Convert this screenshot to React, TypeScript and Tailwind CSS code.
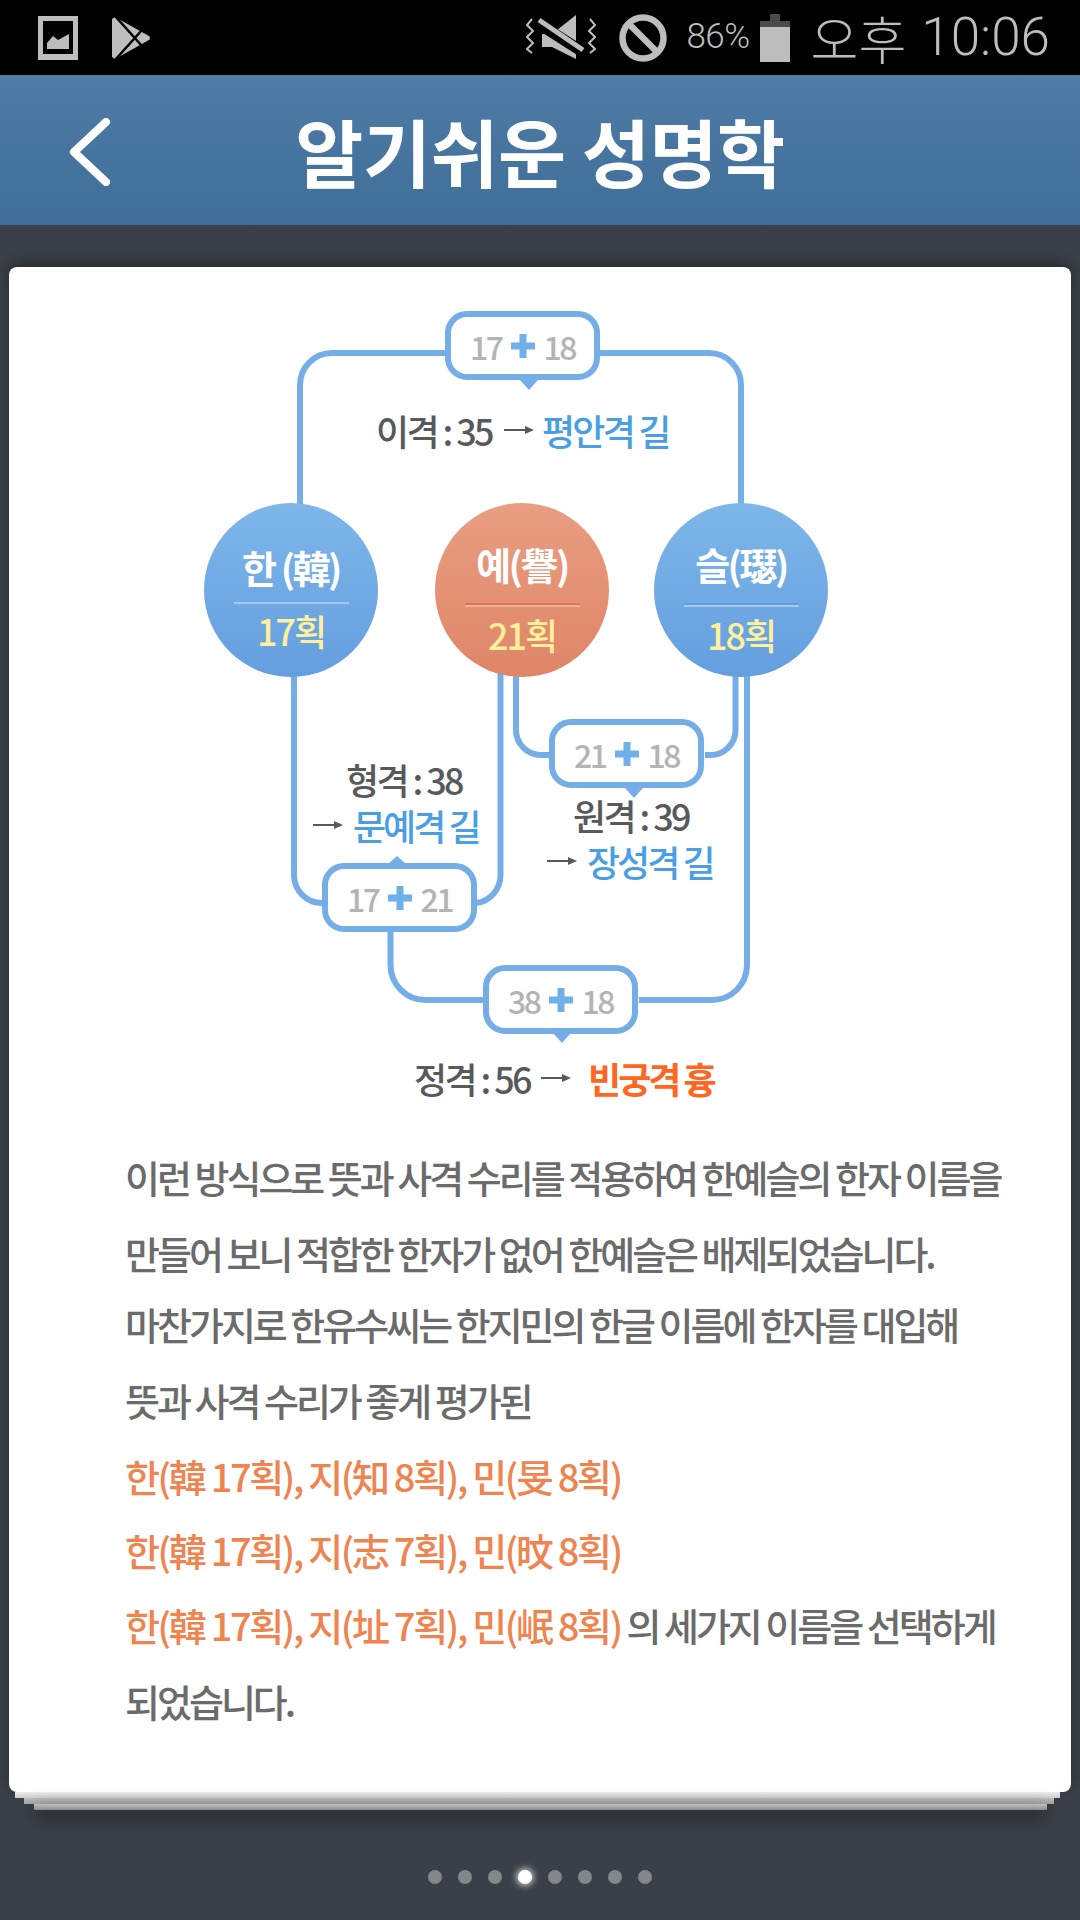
import React from 'react';

const Arrow = () => (
  <svg width="30" height="12" viewBox="0 0 30 12" className="shrink-0">
    <path d="M0 6H25" stroke="#58595b" strokeWidth="2" />
    <path d="M21 2L30 6L21 10Z" fill="#58595b" />
  </svg>
);

const Plus = () => (
  <svg width="24" height="24" viewBox="0 0 24 24" className="shrink-0">
    <path d="M12 0V24M0 12H24" stroke="#6fb0e8" strokeWidth="7" />
  </svg>
);

const SumBox: React.FC<{ a: string; b: string; className: string }> = ({ a, b, className }) => (
  <div className={`absolute flex h-[69px] w-[155px] items-center justify-center gap-[9px] rounded-[22px] border-[6px] border-[#75aee6] bg-white text-[32px] tracking-[-2.5px] text-[#b4b4b4] ${className}`}>
    <span>{a}</span>
    <Plus />
    <span>{b}</span>
  </div>
);

const Circle: React.FC<{ name: string; count: string; className: string; nameClass: string; rule: string; countClass: string }> = ({ name, count, className, nameClass, rule, countClass }) => (
  <div className={`absolute top-[236px] flex h-[174px] w-[174px] flex-col items-center rounded-full ${className}`}>
    <div className={`h-[52px] text-[38px] leading-[52px] font-bold tracking-[-2.5px] text-white ${nameClass}`}>{name}</div>
    <div className={`w-[115px] ${rule}`} />
    <div className={`text-[36px] leading-[46px] font-medium tracking-[-2px] text-[#fff09c] ${countClass}`}>{count}</div>
  </div>
);

const lines = [
  '이런 방식으로 뜻과 사격 수리를 적용하여 한예슬의 한자 이름을',
  '만들어 보니 적합한 한자가 없어 한예슬은 배제되었습니다.',
  '마찬가지로 한유수씨는 한지민의 한글 이름에 한자를 대입해',
  '뜻과 사격 수리가 좋게 평가된',
];

export default function App() {
  return (
    <div className="flex h-[1920px] w-[1080px] flex-col overflow-hidden bg-[#3b3f47] font-['Noto_Sans_CJK_KR',sans-serif]">
      <div className="flex h-[75px] items-center bg-black pr-[30px] pl-[38px] text-[#bdbdbd]">
        <svg width="40" height="44" viewBox="0 0 40 44">
          <path fillRule="evenodd" d="M0 0H40V44H0ZM5 5V38H35V5Z" fill="#bdbdbd" />
          <path d="M9 33V27L15 20L20 24L31 18V33Z" fill="#bdbdbd" />
        </svg>
        <svg width="39" height="44" viewBox="0 0 39 44" className="ml-[34px]">
          <path d="M0 3L3 1L37 20Q39 22 37 24L3 43L0 41Z" fill="#bdbdbd" />
          <path d="M3 0L30 30M3 44L30 14" stroke="#000" strokeWidth="2.5" />
        </svg>
        <svg width="70" height="46" viewBox="0 0 70 46" className="ml-auto">
          <path d="M6 4L1 10L7 16L1 22L7 28L1 34L6 38M64 4L69 10L63 16L69 22L63 28L69 34L64 38" fill="none" stroke="#bdbdbd" strokeWidth="2" />
          <path d="M16 19H26L50 0V44L26 32H16Z" fill="#bdbdbd" />
          <path d="M10 7L60 39" stroke="#000" strokeWidth="11" />
          <path d="M13 5L57 35" stroke="#bdbdbd" strokeWidth="5" />
        </svg>
        <svg width="48" height="48" viewBox="0 0 48 48" className="ml-[23px]">
          <circle cx="24" cy="24" r="20.5" fill="none" stroke="#bdbdbd" strokeWidth="6.5" />
          <path d="M10 10L38 38" stroke="#bdbdbd" strokeWidth="6.5" />
        </svg>
        <span className="ml-[19px] font-['Roboto'] text-[35px] font-light tracking-[-0.5px]">86%</span>
        <svg width="30" height="48" viewBox="0 0 30 48" className="ml-[10px]">
          <path d="M10 0H20V7H30V13H0V7H10Z" fill="#4a4a4a" />
          <path d="M0 13H30V48H0Z" fill="#bdbdbd" />
        </svg>
        <span className="ml-[21px] text-[52px] font-light">오후</span>
        <span className="ml-[15px] font-['Roboto'] text-[53px] font-light">10:06</span>
      </div>

      <div className="relative flex h-[150px] items-center justify-center bg-gradient-to-b from-[#4e7ca6] to-[#3f6e98]">
        <svg width="42" height="68" viewBox="0 0 42 68" className="absolute top-[43px] left-[69px]">
          <path d="M37 4L5 34L37 64" fill="none" stroke="#fff" strokeWidth="8" strokeLinecap="round" strokeLinejoin="round" />
        </svg>
        <span className="text-[74px] leading-none font-bold tracking-[-0.5px] text-white">알기쉬운 성명학</span>
      </div>

      <div className="px-[9px] pt-[42px]">
        <div className="relative h-[1525px] rounded-[8px] bg-white shadow-[0_-4px_14px_rgba(0,0,0,0.35)]">
          <div className="absolute top-[1525px] left-[6px] h-[6px] w-[1045px] bg-gradient-to-b from-[#ececec] to-[#cfcfcf]" />
          <div className="absolute top-[1531px] left-[15px] h-[6px] w-[1030px] bg-gradient-to-b from-[#bdbdbd] to-[#a8a8a8]" />
          <div className="absolute top-[1537px] left-[25px] h-[6px] w-[1013px] bg-gradient-to-b from-[#c0c0c0] to-[#8c8c8c] shadow-[0_6px_18px_rgba(0,0,0,0.7)]" />

          <div className="relative h-[840px] w-full text-[36px] leading-[46px] font-medium tracking-[-2.6px] whitespace-nowrap text-[#58595b]">
            <svg width="1062" height="840" viewBox="9 267 1062 840" className="absolute top-0 left-0" fill="none" stroke="#75aee6" strokeWidth="6">
              <path d="M300 510V385A32 32 0 0 1 332 353H445" />
              <path d="M599 353H709A32 32 0 0 1 741 385V510" />
              <path d="M294 670V875A28 28 0 0 0 322 903" />
              <path d="M500.5 670V875A28 28 0 0 1 476 903" />
              <path d="M516 670V730A25 25 0 0 0 541 755H549" />
              <path d="M735.5 670V730A25 25 0 0 1 710 755H705" />
              <path d="M747 670V965A35 35 0 0 1 712 1000H639" />
              <path d="M390.5 932V965A35 35 0 0 0 425 1000H483" />
              <path d="M520 380H538L529 390Z" fill="#75aee6" stroke="none" />
              <path d="M625 788H643L634 798Z" fill="#75aee6" stroke="none" />
              <path d="M553 1033H571L562 1043Z" fill="#75aee6" stroke="none" />
              <path d="M388 864H406L397 856Z" fill="#75aee6" stroke="none" />
            </svg>

            <SumBox a="17" b="18" className="top-[44px] left-[436px]" />
            <SumBox a="21" b="18" className="top-[452px] left-[540px]" />
            <SumBox a="17" b="21" className="top-[596px] left-[313px]" />
            <SumBox a="38" b="18" className="top-[698px] left-[474px]" />

            <Circle name="한 (韓)" count="17획" className="left-[195px] bg-gradient-to-b from-[#7db7e9] to-[#659edf]" nameClass="mt-[38px]" rule="mt-[9px] h-[2px] bg-[#a3c9ef]" countClass="mt-[3px]" />
            <Circle name="예(譽)" count="21획" className="left-[426px] bg-gradient-to-b from-[#e99e81] to-[#df8568]" nameClass="mt-[35px]" rule="mt-[13px] h-[4px] border-t-2 border-[#dc7558] bg-[#eeb09a]" countClass="mt-[4px]" />
            <Circle name="슬(璱)" count="18획" className="left-[645px] bg-gradient-to-b from-[#7db7e9] to-[#659edf]" nameClass="mt-[35px]" rule="mt-[13px] h-[4px] border-t-2 border-[#619de0] bg-[#a3c9ef]" countClass="mt-[4px]" />

            <div className="absolute top-[140px] left-[367px] flex items-center gap-[12px]">
              <span>이격 : 35</span>
              <Arrow />
              <span className="-ml-[4px] tracking-[-2.8px] text-[#4a9fe2]">평안격 길</span>
            </div>

            <div className="absolute top-[489px] left-[304px] flex flex-col">
              <span className="pl-[33px]">형격 : 38</span>
              <div className="flex items-center gap-[10px]">
                <Arrow />
                <span className="tracking-[-3px] text-[#4a9fe2]">문예격 길</span>
              </div>
            </div>

            <div className="absolute top-[525px] left-[538px] flex flex-col">
              <span className="pl-[26px]">원격 : 39</span>
              <div className="flex items-center gap-[10px]">
                <Arrow />
                <span className="tracking-[-3px] text-[#4a9fe2]">장성격 길</span>
              </div>
            </div>

            <div className="absolute top-[788px] left-[405px] flex items-center gap-[11px]">
              <span>정격 : 56</span>
              <Arrow />
              <span className="ml-[6px] tracking-[-3px] font-bold text-[#ff6622]">빈궁격 흉</span>
            </div>
          </div>

          <div className="pl-[116px] text-[38px] font-medium tracking-[-3px] whitespace-nowrap text-[#6b6b6b]">
            <div className="mt-[50px] h-[76px] leading-[40px]">{lines[0]}</div>
            <div className="h-[71px] leading-[40px]">{lines[1]}</div>
            <div className="h-[76px] leading-[40px]">{lines[2]}</div>
            <div className="h-[76px] leading-[40px]">{lines[3]}</div>
            <div className="h-[74px] leading-[40px] tracking-[-2.35px] text-[#ee8450]">한(韓 17획), 지(知 8획), 민(旻 8획)</div>
            <div className="h-[75px] leading-[40px] tracking-[-2.35px] text-[#ee8450]">한(韓 17획), 지(志 7획), 민(旼 8획)</div>
            <div className="h-[76px] leading-[40px]"><span className="tracking-[-2.35px] text-[#ee8450]">한(韓 17획), 지(址 7획), 민(岷 8획)</span> 의 세가지 이름을 선택하게</div>
            <div className="h-[40px] leading-[40px]">되었습니다.</div>
          </div>
        </div>
      </div>

      <div className="mt-[78px] flex h-[14px] items-center justify-center gap-[16px]">
        {[0, 1, 2, 3, 4, 5, 6, 7].map(i => (
          <div key={i} className={i === 3 ? 'h-[14px] w-[14px] rounded-full bg-white shadow-[0_0_6px_2px_rgba(255,255,255,0.7)]' : 'h-[14px] w-[14px] rounded-full bg-[#83878c]'} />
        ))}
      </div>
    </div>
  );
}
